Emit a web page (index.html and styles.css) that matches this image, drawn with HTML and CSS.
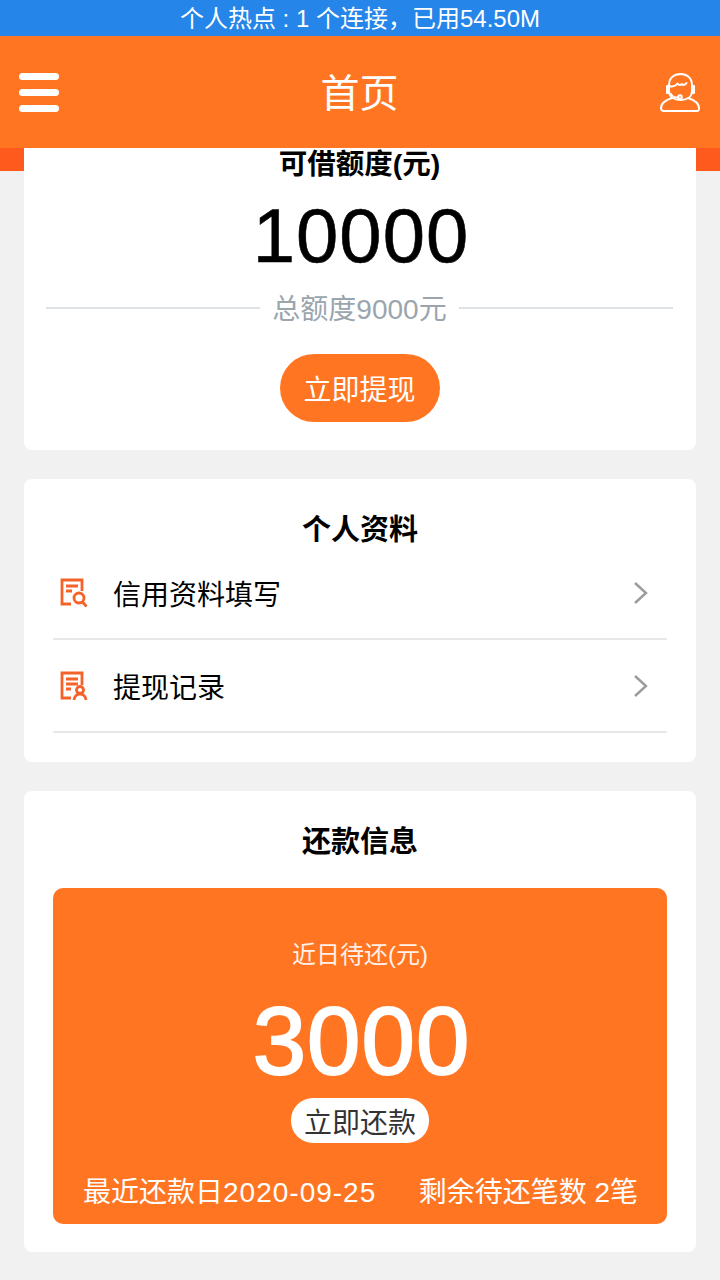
FILE: index.html
```html
<!DOCTYPE html>
<html lang="zh-CN">
  <head>
    <meta charset="UTF-8" />
    <title>首页</title>
    <link rel="stylesheet" href="styles.css">
  </head>
  <body>
    <div class="hotspot">个人热点 : 1 个连接，已用54.50M</div>

    <header class="topbar">
      <div class="menu-icon"><span></span><span></span><span></span></div>
      <h1>首页</h1>
      <svg class="service-icon" viewBox="0 0 40 40" fill="none" stroke="#fff" stroke-width="2" stroke-linecap="round" stroke-linejoin="round">
        <path d="M9 13C9 6 14 2 20.500 2S32 6 32 13v6c0 6-5 9-11.500 9S9 25 9 19z" />
        <path d="M9.500 14c3 1 6 0 8-2.500 1.500 2 3 2 4.500.5 1.500 1.500 3 1 4.500-1" />
        <path d="M9 14H7v7h2M32 14h2v7h-2" />
        <path d="M11 22c1 2.500 3.500 3.500 7 3.500" />
        <circle cx="20" cy="25" r="1.800" />
        <path d="M12 26c-6 2-11 5-11 10 0 2 1 3 3 3h33c2 0 2-1 2-3 0-5-5-8-11-10" />
      </svg>
    </header>

    <main class="content">
      <section class="card quota">
        <div class="quota-title">可借额度(元)</div>
        <div class="quota-num">10000</div>
        <div class="quota-total"><span>总额度9000元</span></div>
        <a href="#" class="btn-cash">立即提现</a>
      </section>

      <section class="card profile">
        <h2>个人资料</h2>
        <div class="row">
          <svg class="row-icon" viewBox="0 0 28 30" fill="none" stroke="#f4622a" stroke-width="2.800">
            <path d="M11 26H2V2h20v11" />
            <path d="M6 8h12M6 13h6" />
            <circle cx="19" cy="20" r="5" />
            <path d="M22.500 24l4 4.500" />
          </svg>
          <span class="row-label">信用资料填写</span>
          <svg class="chevron" viewBox="0 0 16 24" fill="none" stroke="#9b9b9b" stroke-width="2.400"><path d="M2 2l11 10L2 22" /></svg>
        </div>
        <div class="row">
          <svg class="row-icon" viewBox="0 0 28 30" fill="none" stroke="#f4622a" stroke-width="2.800">
            <path d="M11 27H2V2h20v12" />
            <path d="M6 8h12M6 13h12M6 18h5" />
            <circle cx="20" cy="19" r="3.500" />
            <path d="M14 29c0-3 2.500-6 6-6s6 3 6 6" />
          </svg>
          <span class="row-label">提现记录</span>
          <svg class="chevron" viewBox="0 0 16 24" fill="none" stroke="#9b9b9b" stroke-width="2.400"><path d="M2 2l11 10L2 22" /></svg>
        </div>
      </section>

      <section class="card repay">
        <h2>还款信息</h2>
        <div class="repay-box">
          <div class="repay-label">近日待还(元)</div>
          <div class="repay-num">3000</div>
          <a href="#" class="btn-repay">立即还款</a>
          <div class="repay-foot">
            <span>最近还款日<span class="repay-date">2020-09-25</span></span>
            <span>剩余待还笔数 2笔</span>
          </div>
        </div>
      </section>
    </main>
  </body>
</html>
```

FILE: styles.css
```css
* {
  box-sizing: border-box;
}

body {
  margin: 0;
  min-height: 1280px;
  background-color: #f1f1f1;
  font-family: "Liberation Sans", "Noto Sans CJK SC", sans-serif;
  color: #000;
}

.hotspot {
  height: 36px;
  line-height: 38px;
  background-color: #2585e8;
  color: #fff;
  font-size: 24px;
  text-align: center;
  white-space: nowrap;
}

.topbar {
  height: 112px;
  padding: 0 20px 0 19px;
  display: flex;
  align-items: center;
  justify-content: space-between;
  background-color: #ff7522;
}

.topbar h1 {
  margin: 4px 0 0;
  color: #fff;
  font-size: 39px;
  font-weight: 400;
  line-height: 108px;
}

.menu-icon {
  width: 40px;
  display: flex;
  flex-direction: column;
  gap: 9px;
}

.menu-icon span {
  height: 7px;
  border-radius: 4px;
  background-color: #fff;
}

.service-icon {
  width: 40px;
  height: 40px;
}

.content {
  padding: 0 24px 28px;
  background: linear-gradient(#ff5a1e, #ff5a1e) no-repeat 0 0 / 100% 23px;
}

.card {
  background-color: #fff;
  border-radius: 8px;
  margin-bottom: 29px;
}

.quota {
  height: 302px;
  border-radius: 0 0 8px 8px;
  padding: 0 23px 0 22px;
  display: flex;
  flex-direction: column;
  align-items: center;
}

.quota-title {
  font-size: 28.500px;
  font-weight: 700;
  line-height: 32px;
}

.quota-num {
  margin-top: 2px;
  padding-left: 3px;
  font-size: 76px;
  letter-spacing: 1px;
  line-height: 108px;
  -webkit-text-stroke: 0.6px #000;
}

.quota-total {
  width: 100%;
  height: 36px;
  display: flex;
  align-items: center;
  gap: 12px;
  color: #9aa5ae;
  font-size: 28px;
  line-height: 36px;
}

.quota-total span {
  padding-top: 4px;
}

.quota-total::before,
.quota-total::after {
  content: "";
  flex: 1;
  height: 2px;
  background-color: #dfe2e4;
}

.btn-cash {
  margin-top: 28px;
  width: 160px;
  height: 68px;
  line-height: 74px;
  border-radius: 34px;
  background-color: #ff7522;
  color: #fff;
  font-size: 28px;
  text-align: center;
  text-decoration: none;
}

h2 {
  margin: 0;
  font-size: 29px;
  font-weight: 700;
  text-align: center;
  line-height: 40px;
}

.profile {
  height: 283px;
  padding: 31px 29px 0;
}

.row {
  height: 93px;
  padding: 0 18px 0 7px;
  display: flex;
  align-items: center;
  border-bottom: 2px solid #e8e8e8;
}

.profile h2 + .row {
  height: 90px;
  padding-bottom: 2px;
}

.row-icon {
  width: 28px;
  height: 30px;
}

.row-label {
  flex: 1;
  margin-left: 25px;
  font-size: 28px;
}

.chevron {
  width: 16px;
  height: 24px;
}

.repay {
  height: 461px;
  padding: 31px 29px 0;
}

.repay-box {
  margin-top: 26px;
  height: 336px;
  padding: 45px 29px 0;
  border-radius: 10px;
  background-color: #ff7522;
  color: #fff;
  display: flex;
  flex-direction: column;
  align-items: center;
}

.repay-label {
  font-size: 24px;
  line-height: 44px;
  opacity: 0.9;
}

.repay-num {
  padding-left: 3px;
  font-size: 96px;
  letter-spacing: 1px;
  line-height: 110px;
  margin: 9px 0 2px;
  -webkit-text-stroke: 2px #fff;
}

.btn-repay {
  width: 138px;
  height: 45px;
  line-height: 51px;
  border-radius: 22px;
  background-color: #fff;
  color: #333;
  font-size: 28px;
  text-align: center;
  text-decoration: none;
}

.repay-foot {
  width: 100%;
  margin-top: 30px;
  padding-left: 1px;
  display: flex;
  justify-content: space-between;
  font-size: 28px;
  line-height: 40px;
  white-space: nowrap;
}

.repay-date {
  letter-spacing: 1px;
}
```
